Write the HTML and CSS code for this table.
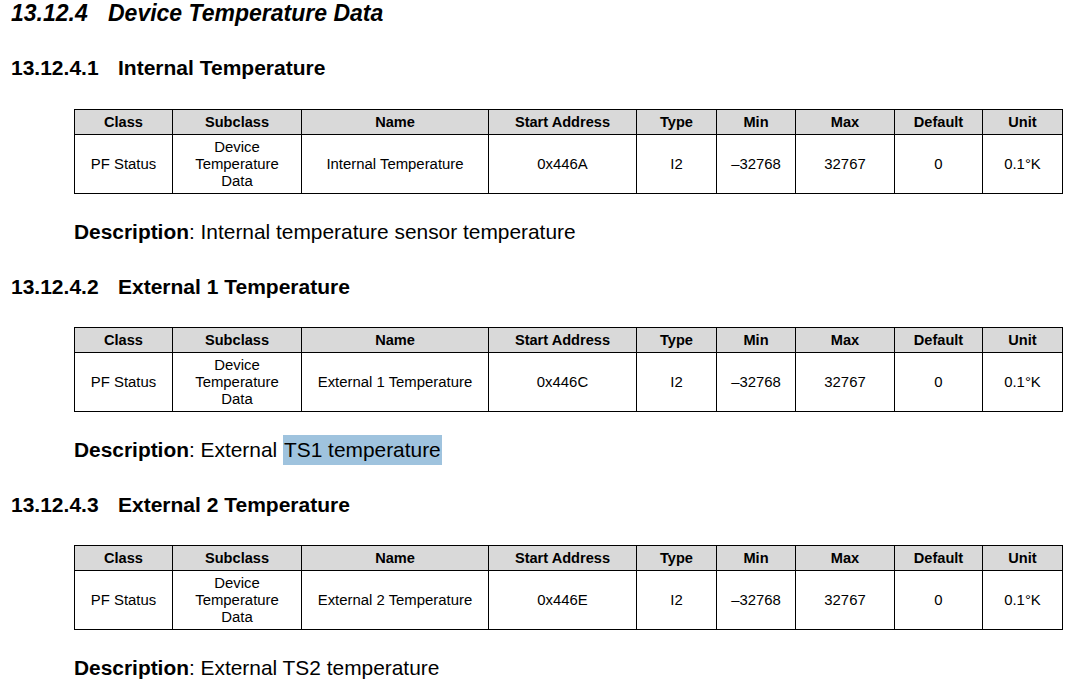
FILE: index.html
```html
<!DOCTYPE html>
<html>
<head>
<meta charset="utf-8">
<link rel="stylesheet" href="styles.css">
</head>
<body>
<div class="page">
  <h1 class="h1"><span class="num">13.12.4</span>Device Temperature Data</h1>

  <h2 class="h2 first"><span class="num2">13.12.4.1</span>Internal Temperature</h2>
  <table class="reg">
    <colgroup>
      <col class="c1"><col class="c2"><col class="c3"><col class="c4"><col class="c5"><col class="c6"><col class="c7"><col class="c8"><col class="c9">
    </colgroup>
    <thead>
      <tr><th>Class</th><th>Subclass</th><th>Name</th><th>Start Address</th><th>Type</th><th>Min</th><th>Max</th><th>Default</th><th>Unit</th></tr>
    </thead>
    <tbody>
      <tr><td>PF Status</td><td>Device<br>Temperature<br>Data</td><td>Internal Temperature</td><td>0x446A</td><td>I2</td><td>–32768</td><td>32767</td><td>0</td><td>0.1°K</td></tr>
    </tbody>
  </table>
  <p class="desc"><b>Description</b>: Internal temperature sensor temperature</p>

  <h2 class="h2"><span class="num2">13.12.4.2</span>External 1 Temperature</h2>
  <table class="reg">
    <colgroup>
      <col class="c1"><col class="c2"><col class="c3"><col class="c4"><col class="c5"><col class="c6"><col class="c7"><col class="c8"><col class="c9">
    </colgroup>
    <thead>
      <tr><th>Class</th><th>Subclass</th><th>Name</th><th>Start Address</th><th>Type</th><th>Min</th><th>Max</th><th>Default</th><th>Unit</th></tr>
    </thead>
    <tbody>
      <tr><td>PF Status</td><td>Device<br>Temperature<br>Data</td><td>External 1 Temperature</td><td>0x446C</td><td>I2</td><td>–32768</td><td>32767</td><td>0</td><td>0.1°K</td></tr>
    </tbody>
  </table>
  <p class="desc"><b>Description</b>: External <span class="sel">TS1 temperature</span></p>

  <h2 class="h2"><span class="num2">13.12.4.3</span>External 2 Temperature</h2>
  <table class="reg">
    <colgroup>
      <col class="c1"><col class="c2"><col class="c3"><col class="c4"><col class="c5"><col class="c6"><col class="c7"><col class="c8"><col class="c9">
    </colgroup>
    <thead>
      <tr><th>Class</th><th>Subclass</th><th>Name</th><th>Start Address</th><th>Type</th><th>Min</th><th>Max</th><th>Default</th><th>Unit</th></tr>
    </thead>
    <tbody>
      <tr><td>PF Status</td><td>Device<br>Temperature<br>Data</td><td>External 2 Temperature</td><td>0x446E</td><td>I2</td><td>–32768</td><td>32767</td><td>0</td><td>0.1°K</td></tr>
    </tbody>
  </table>
  <p class="desc"><b>Description</b>: External TS2 temperature</p>
</div>
</body>
</html>
```

FILE: styles.css
```css
html, body {
  margin: 0;
  padding: 0;
  background: #ffffff;
}

body {
  font-family: "Liberation Sans", Arial, sans-serif;
  color: #000000;
}

.page {
  padding-left: 11px;
}

.h1 {
  margin: 0;
  font-size: 23px;
  line-height: 26px;
  font-weight: bold;
  font-style: italic;
}

.num {
  display: inline-block;
  width: 97px;
}

.h2 {
  margin: 31px 0 0 0;
  font-size: 21px;
  line-height: 24px;
  font-weight: bold;
}

.h2.first {
  margin-top: 30px;
}

.num2 {
  display: inline-block;
  width: 107px;
}

.reg {
  margin: 28px 0 0 63px;
  border-collapse: collapse;
  table-layout: fixed;
  width: 989px;
}

.h2.first + .reg {
  margin-top: 29px;
}

.reg th,
.reg td {
  border: 1px solid #000000;
  text-align: center;
  vertical-align: middle;
  padding: 0 4px;
}

.reg th {
  background: #d9d9d9;
  height: 24px;
  font-size: 14.6px;
  line-height: 17px;
  font-weight: bold;
}

.reg td {
  height: 58px;
  font-size: 14.9px;
  line-height: 17px;
}

.c1 { width: 98px; }
.c2 { width: 129px; }
.c3 { width: 187px; }
.c4 { width: 148px; }
.c5 { width: 80px; }
.c6 { width: 79px; }
.c7 { width: 99px; }
.c8 { width: 88px; }
.c9 { width: 80px; }

.desc {
  margin: 26px 0 0 63px;
  font-size: 20.9px;
  line-height: 24px;
}

.sel {
  background: #9fc3de;
  padding: 3px 1px 4px 1px;
}
```
